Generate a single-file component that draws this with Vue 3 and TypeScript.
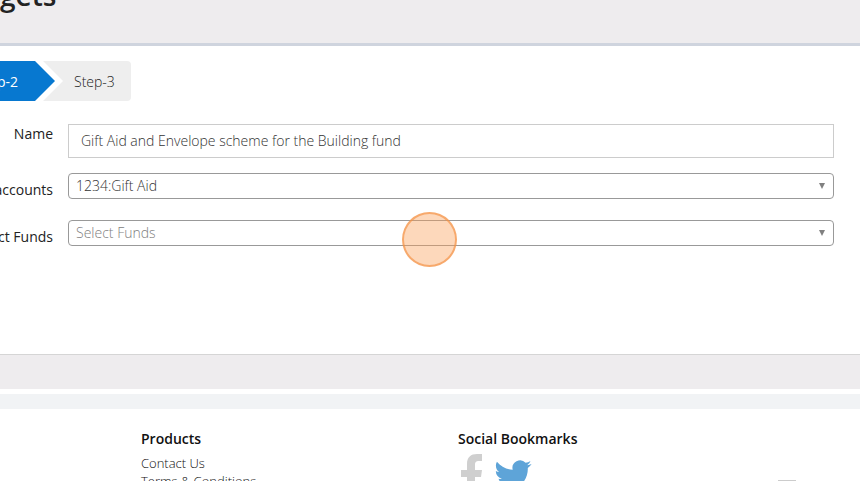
<script setup lang="ts">
import { ref } from 'vue'

const name = ref('Gift Aid and Envelope scheme for the Building fund')
const account = ref('1234:Gift Aid')
const fund = ref('')
</script>

<template>
  <div class="page">
    <header class="page-header"><h1>gets</h1></header>

    <main class="panel">
      <nav class="steps">
        <a href="#" class="step active">
          <span>p-2</span>
          <svg class="arrow" viewBox="0 0 28 40" aria-hidden="true">
            <path d="M0 0H8L28 20L8 40H0Z" fill="#fff" />
            <path d="M0 0L20 20L0 40Z" fill="#0778d0" />
          </svg>
        </a>
        <a href="#" class="step">Step-3</a>
      </nav>

      <form class="form" @submit.prevent>
        <label for="name" class="name-label">Name</label>
        <input id="name" v-model="name" type="text" />

        <label for="account">accounts</label>
        <div class="select">
          <select id="account" v-model="account">
            <option>1234:Gift Aid</option>
          </select>
          <svg viewBox="0 0 6 6" aria-hidden="true"><path d="M0 0H6L3 6Z" fill="#808080" /></svg>
        </div>

        <label for="fund">ct Funds</label>
        <div class="select">
          <select id="fund" v-model="fund" class="empty">
            <option value="">Select Funds</option>
          </select>
          <svg viewBox="0 0 6 6" aria-hidden="true"><path d="M0 0H6L3 6Z" fill="#808080" /></svg>
        </div>
      </form>
      <div class="click-marker"></div>
    </main>

    <div class="actions"></div>
    <div class="divider"></div>

    <footer class="footer">
      <section>
        <h2>Products</h2>
        <a href="#">Contact Us</a>
        <a href="#">Terms &amp; Conditions</a>
      </section>
      <section>
        <h2>Social Bookmarks</h2>
        <div class="social">
          <a href="#" aria-label="Facebook">
            <svg width="22" height="44" viewBox="0 0 22 44">
              <path d="M21 0V7H18C15 7 14 8 14 11V16H21L20 23H14V44H6V23H0V16H6V10C6 3 10 0 16 0Z" fill="#cfcfcf" />
            </svg>
          </a>
          <a href="#" aria-label="Twitter" class="twitter">
            <svg width="38" height="31" viewBox="0 0 24 20">
              <path d="M23.95 2.57a10 10 0 0 1-2.82.78 4.96 4.96 0 0 0 2.16-2.73 9.9 9.9 0 0 1-3.12 1.19 4.92 4.92 0 0 0-8.38 4.48C7.69 6.1 4.07 4.13 1.64 1.16a4.82 4.82 0 0 0-.67 2.48c0 1.71.87 3.21 2.19 4.1a4.9 4.9 0 0 1-2.23-.62v.06a4.92 4.92 0 0 0 3.95 4.83 5 5 0 0 1-2.21.08 4.94 4.94 0 0 0 4.6 3.42A9.87 9.87 0 0 1 0 17.54a14 14 0 0 0 7.56 2.21c9.05 0 14-7.5 14-13.99 0-.21 0-.42-.02-.63a9.94 9.94 0 0 0 2.46-2.55z" fill="#5ea4d8" />
            </svg>
          </a>
        </div>
      </section>
      <section class="badge-column"><div class="badge"></div></section>
    </footer>
  </div>
</template>

<style>
body {
  background: #fff;
}
</style>

<style scoped>
.page {
  height: 100vh;
  overflow: hidden;
  color: #222;
  font: 14px/20px 'Open Sans', sans-serif;
}
.page *,
.page {
  box-sizing: border-box;
}
a {
  color: inherit;
  text-decoration: none;
}
.page-header {
  display: flex;
  align-items: flex-end;
  height: 46px;
  padding-bottom: 28px;
  background: #eeecee;
  border-bottom: 3px solid #cfd4de;
}
h1 {
  margin: 0;
  font-size: 28px;
  line-height: 40px;
  font-weight: 600;
}
.panel {
  position: relative;
  height: 309px;
  padding: 15px 26px 0 0;
  border-bottom: 1px solid #d5d5d5;
}
.steps {
  display: flex;
  height: 40px;
  line-height: 42px;
}
.step {
  padding: 0 16px 0 39px;
  background: #eee;
  border-radius: 0 4px 4px 0;
  color: #222;
  font-weight: 300;
}
.step.active {
  position: relative;
  width: 35px;
  padding: 0;
  background: #0778d0;
  border-radius: 0;
  color: #fff;
  font-weight: 400;
}
.step.active span {
  display: flex;
  justify-content: flex-end;
  width: 18px;
  white-space: nowrap;
}
.arrow {
  position: absolute;
  left: 100%;
  top: 0;
  width: 28px;
  height: 40px;
}
.form {
  display: grid;
  grid-template-columns: 53px 1fr;
  column-gap: 15px;
  row-gap: 15px;
  padding-top: 23px;
}
label {
  display: flex;
  justify-content: flex-end;
  padding-top: 7px;
  white-space: nowrap;
}
.name-label {
  padding-top: 0;
}
input {
  width: 100%;
  height: 34px;
  padding: 0 12px 2px;
  border: 1px solid #ccc;
  border-radius: 0;
  background: #fff;
  color: #333;
  font: inherit;
  font-weight: 300;
}
.select {
  position: relative;
  height: 32px;
}
.select select {
  display: block;
  appearance: none;
  width: 100%;
  height: 26px;
  padding: 0 20px 0 7px;
  border: 1px solid #999;
  border-radius: 4px;
  background: #fff;
  color: #333;
  font: inherit;
  font-weight: 300;
}
.select select.empty {
  color: #808080;
}
.select svg {
  position: absolute;
  top: 10px;
  right: 9px;
  width: 6px;
  height: 6px;
  pointer-events: none;
}
.click-marker {
  position: absolute;
  left: 402px;
  top: 166px;
  width: 55px;
  height: 55px;
  border: 2px solid rgba(242, 143, 66, 0.65);
  border-radius: 50%;
  background: rgba(249, 158, 86, 0.4);
  pointer-events: none;
}
.actions {
  height: 34px;
  background: #eeecee;
}
.divider {
  height: 15px;
  margin-top: 5px;
  background: #f1f3f5;
}
.footer {
  display: grid;
  grid-template-columns: 317px 320px 1fr;
  padding: 20px 0 0 141px;
}
.footer section > a {
  display: block;
  font-size: 13px;
  line-height: 18px;
  font-weight: 300;
  color: #111;
}
.footer h2 {
  margin: 0 0 5px;
  font-size: 14px;
  line-height: 20px;
  font-weight: 600;
  color: #111;
}
.social {
  display: flex;
  gap: 11px;
  padding-left: 3px;
}
.social svg {
  display: block;
}
.twitter {
  padding-top: 6px;
}
.badge-column {
  padding-top: 51px;
}
.badge {
  width: 18px;
  height: 12px;
  background: #ccc;
}
</style>
